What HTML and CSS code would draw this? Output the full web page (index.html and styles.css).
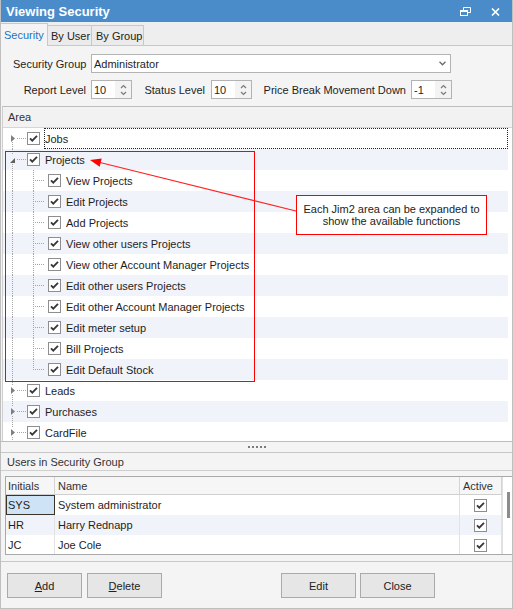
FILE: index.html
```html
<!DOCTYPE html>
<html>
<head>
<meta charset="utf-8">
<link rel="stylesheet" href="styles.css">
</head>
<body>
<div class="window">
  <div class="titlebar">
    <span class="title">Viewing Security</span>
    <div class="tb-icons">
      <svg class="restore" width="11" height="9" viewBox="0 0 11 9" fill="none" stroke="#fff"><path d="M3.5 3V0.5h7v5H8"/><rect x="0.5" y="3.5" width="7" height="5"/><path d="M0.5 4.5h7"/></svg>
      <svg class="close" width="9" height="8" viewBox="0 0 9 8" fill="none" stroke="#fff" stroke-width="1.6"><path d="M1 0.5l7 7M8 0.5l-7 7"/></svg>
    </div>
  </div>

  <div class="tabs">
    <div class="tab active t-sec">Security</div>
    <div class="tab t-user">By User</div>
    <div class="tab t-group">By Group</div>
  </div>

  <div class="form">
    <div class="frow">
      <span class="flabel w-sg">Security Group</span>
      <div class="combo"><span>Administrator</span><svg width="7" height="5" viewBox="0 0 7 5" fill="none" stroke="#6b6b6b" stroke-width="1.3"><path d="M0.5 0.8l3 3 3-3"/></svg></div>
    </div>
    <div class="frow">
      <span class="flabel w-rl">Report Level</span>
      <div class="spin"><span class="sv">10</span><span class="sb"><svg width="7" height="12" viewBox="0 0 7 12" fill="none" stroke="#7a7a7a" stroke-width="1.2"><path d="M1 4l2.5-2.5L6 4M1 8l2.5 2.5L6 8"/></svg></span></div>
      <span class="flabel w-st">Status Level</span>
      <div class="spin"><span class="sv">10</span><span class="sb"><svg width="7" height="12" viewBox="0 0 7 12" fill="none" stroke="#7a7a7a" stroke-width="1.2"><path d="M1 4l2.5-2.5L6 4M1 8l2.5 2.5L6 8"/></svg></span></div>
      <span class="flabel w-pb">Price Break Movement Down</span>
      <div class="spin"><span class="sv">-1</span><span class="sb"><svg width="7" height="12" viewBox="0 0 7 12" fill="none" stroke="#7a7a7a" stroke-width="1.2"><path d="M1 4l2.5-2.5L6 4M1 8l2.5 2.5L6 8"/></svg></span></div>
    </div>
  </div>

  <div class="tree">
    <div class="tree-head">Area</div>
    <div class="tree-body">
      <div class="trow"><span class="g0 rootfirst"><svg class="exp-c" width="4" height="7" viewBox="0 0 4 7"><path d="M0 0L4 3.5L0 7Z"/></svg></span><span class="cb"><svg viewBox="0 0 11 11"><path d="M2 5.3l2.3 2.4L9 2.8"/></svg></span><span class="tl focus">Jobs</span></div>
      <div class="trow"><span class="g0 root"><svg class="exp-e" width="5" height="5" viewBox="0 0 5 5"><path d="M5 0V5H0Z"/></svg></span><span class="cb"><svg viewBox="0 0 11 11"><path d="M2 5.3l2.3 2.4L9 2.8"/></svg></span><span class="tl">Projects</span></div>
      <div class="trow"><span class="g0 pass"></span><span class="g1"></span><span class="cb"><svg viewBox="0 0 11 11"><path d="M2 5.3l2.3 2.4L9 2.8"/></svg></span><span class="tl">View Projects</span></div>
      <div class="trow"><span class="g0 pass"></span><span class="g1"></span><span class="cb"><svg viewBox="0 0 11 11"><path d="M2 5.3l2.3 2.4L9 2.8"/></svg></span><span class="tl">Edit Projects</span></div>
      <div class="trow"><span class="g0 pass"></span><span class="g1"></span><span class="cb"><svg viewBox="0 0 11 11"><path d="M2 5.3l2.3 2.4L9 2.8"/></svg></span><span class="tl">Add Projects</span></div>
      <div class="trow"><span class="g0 pass"></span><span class="g1"></span><span class="cb"><svg viewBox="0 0 11 11"><path d="M2 5.3l2.3 2.4L9 2.8"/></svg></span><span class="tl">View other users Projects</span></div>
      <div class="trow"><span class="g0 pass"></span><span class="g1"></span><span class="cb"><svg viewBox="0 0 11 11"><path d="M2 5.3l2.3 2.4L9 2.8"/></svg></span><span class="tl">View other Account Manager Projects</span></div>
      <div class="trow"><span class="g0 pass"></span><span class="g1"></span><span class="cb"><svg viewBox="0 0 11 11"><path d="M2 5.3l2.3 2.4L9 2.8"/></svg></span><span class="tl">Edit other users Projects</span></div>
      <div class="trow"><span class="g0 pass"></span><span class="g1"></span><span class="cb"><svg viewBox="0 0 11 11"><path d="M2 5.3l2.3 2.4L9 2.8"/></svg></span><span class="tl">Edit other Account Manager Projects</span></div>
      <div class="trow"><span class="g0 pass"></span><span class="g1"></span><span class="cb"><svg viewBox="0 0 11 11"><path d="M2 5.3l2.3 2.4L9 2.8"/></svg></span><span class="tl">Edit meter setup</span></div>
      <div class="trow"><span class="g0 pass"></span><span class="g1"></span><span class="cb"><svg viewBox="0 0 11 11"><path d="M2 5.3l2.3 2.4L9 2.8"/></svg></span><span class="tl">Bill Projects</span></div>
      <div class="trow"><span class="g0 pass"></span><span class="g1 last"></span><span class="cb"><svg viewBox="0 0 11 11"><path d="M2 5.3l2.3 2.4L9 2.8"/></svg></span><span class="tl">Edit Default Stock</span></div>
      <div class="trow"><span class="g0 root"><svg class="exp-c" width="4" height="7" viewBox="0 0 4 7"><path d="M0 0L4 3.5L0 7Z"/></svg></span><span class="cb"><svg viewBox="0 0 11 11"><path d="M2 5.3l2.3 2.4L9 2.8"/></svg></span><span class="tl">Leads</span></div>
      <div class="trow"><span class="g0 root"><svg class="exp-c" width="4" height="7" viewBox="0 0 4 7"><path d="M0 0L4 3.5L0 7Z"/></svg></span><span class="cb"><svg viewBox="0 0 11 11"><path d="M2 5.3l2.3 2.4L9 2.8"/></svg></span><span class="tl">Purchases</span></div>
      <div class="trow"><span class="g0 root"><svg class="exp-c" width="4" height="7" viewBox="0 0 4 7"><path d="M0 0L4 3.5L0 7Z"/></svg></span><span class="cb"><svg viewBox="0 0 11 11"><path d="M2 5.3l2.3 2.4L9 2.8"/></svg></span><span class="tl">CardFile</span></div>
    </div>
  </div>

  <div class="splitter"><span class="dots"><i></i><i></i><i></i><i></i><i></i></span></div>

  <div class="users-head">Users in Security Group</div>

  <div class="grid">
    <div class="gtable">
      <div class="gc gh">Initials</div><div class="gc gh">Name</div><div class="gc gh">Active</div>
      <div class="gc sel">SYS</div><div class="gc">System administrator</div><div class="gc gck"><span class="cb"><svg viewBox="0 0 11 11"><path d="M2 5.3l2.3 2.4L9 2.8"/></svg></span></div>
      <div class="gc alt">HR</div><div class="gc alt">Harry Rednapp</div><div class="gc gck alt"><span class="cb"><svg viewBox="0 0 11 11"><path d="M2 5.3l2.3 2.4L9 2.8"/></svg></span></div>
      <div class="gc">JC</div><div class="gc">Joe Cole</div><div class="gc gck"><span class="cb"><svg viewBox="0 0 11 11"><path d="M2 5.3l2.3 2.4L9 2.8"/></svg></span></div>
    </div>
    <div class="vscroll"><span class="thumb"></span></div>
  </div>

  <div class="buttons">
    <div class="btn"><u>A</u>dd</div>
    <div class="btn"><u>D</u>elete</div>
    <div class="btn b-edit">Edit</div>
    <div class="btn b-close">Close</div>
  </div>

  <div class="redbox"></div>
  <svg class="arrow" width="513" height="609" viewBox="0 0 513 609">
    <line x1="100" y1="162.5" x2="296" y2="211" stroke="#f22" stroke-width="1.1"/>
    <polygon points="90,160 101.7,158.6 99.7,166.8" fill="#f00"/>
  </svg>
  <div class="callout">Each Jim2 area can be expanded to<br>show the available functions</div>
</div>
</body>
</html>
```

FILE: styles.css
```css
html, body {
  margin: 0;
  padding: 0;
}
body {
  font-family: "Liberation Sans", Arial, sans-serif;
  font-size: 11px;
  color: #1e1e1e;
  background: #ffffff;
}
.window {
  --dv: repeating-linear-gradient(to bottom, #a6a6a6 0 1px, transparent 1px 2px);
  --dh: repeating-linear-gradient(to right, #a6a6a6 0 1px, transparent 1px 2px);
  position: relative;
  width: 513px;
  height: 609px;
  box-sizing: border-box;
  border: 1px solid #bfbfbf;
  border-top: none;
  background: #f4f4f4;
  display: flex;
  flex-direction: column;
  overflow: hidden;
}

/* title bar */
.titlebar {
  margin: 0 -1px;
  height: 22px;
  flex: none;
  background: #4a8cca;
  color: #fff;
  display: flex;
  align-items: center;
  padding: 0 13px 0 6px;
}
.title {
  font-weight: bold;
  font-size: 13px;
  letter-spacing: 0;
}
.tb-icons {
  margin-left: auto;
  display: flex;
  align-items: center;
  gap: 20px;
}
.tb-icons .restore { margin-top: 1px; }
.tb-icons .close { margin-top: 2px; }

/* tabs */
.tabs {
  flex: none;
  height: 24px;
  box-sizing: border-box;
  background: #eeeeee;
  border-bottom: 1px solid #c8c8c8;
  display: flex;
  align-items: flex-end;
}
.tab {
  height: 20px;
  box-sizing: border-box;
  border: 1px solid #c8c8c8;
  border-bottom: none;
  background: #ebebeb;
  display: flex;
  align-items: center;
  padding: 1px 0 0 3px;
  margin-left: -1px;
  color: #222;
}
.tab.active {
  height: 23px;
  background: #f4f4f4;
  color: #1f72c4;
  margin-bottom: -1px;
  margin-left: -1px;
  position: relative;
  z-index: 1;
  padding-top: 0;
  padding-bottom: 1px;
}
.t-sec { width: 48px; }
.t-user { width: 45px; }
.t-group { width: 53px; padding-left: 4px; }

/* form */
.form {
  flex: none;
  padding: 8px 0 7px 12px;
  display: flex;
  flex-direction: column;
  gap: 7px;
}
.frow {
  display: flex;
  align-items: center;
  height: 19px;
}
.flabel {
  text-align: right;
  white-space: nowrap;
  color: #1e1e1e;
}
.w-sg { width: 73px; margin-right: 5px; }
.w-rl { width: 73px; margin-right: 5px; }
.w-st { width: 73px; margin-right: 6px; }
.w-pb { width: 154px; margin-right: 5px; }
.combo {
  width: 360px;
  height: 19px;
  box-sizing: border-box;
  border: 1px solid #b3b3b3;
  background: #fff;
  display: flex;
  align-items: center;
  justify-content: space-between;
  padding: 0 4px 0 2px;
}
.spin {
  width: 41px;
  height: 19px;
  box-sizing: border-box;
  border: 1px solid #b3b3b3;
  background: #fff;
  display: flex;
  align-items: stretch;
}
.sv {
  flex: 1;
  display: flex;
  align-items: center;
  padding-left: 2px;
}
.sb {
  width: 16px;
  background: #f3f3f3;
  display: flex;
  align-items: center;
  justify-content: center;
}

/* tree */
.tree {
  flex: none;
  height: 335px;
  box-sizing: border-box;
  border-top: 1px solid #bdbdbd;
  margin-left: 1px;
  border-left: 1px solid #cfcfcf;
  background: #fff;
  display: flex;
  flex-direction: column;
}
.tree-head {
  flex: none;
  height: 21px;
  box-sizing: border-box;
  border-bottom: 1px solid #d6d6d6;
  background: #f2f2f2;
  display: flex;
  align-items: center;
  padding-left: 5px;
  color: #333;
}
.tree-body {
  flex: 1;
  overflow: hidden;
  padding-right: 4px;
  background: #fff;
}
.trow {
  height: 21px;
  display: flex;
  align-items: center;
  color: #1e1e1e;
}
.trow:nth-child(even) {
  background: #f0f3f9;
}
.g0 {
  flex: none;
  width: 24px;
  height: 21px;
  display: flex;
  align-items: center;
}
.g0.rootfirst {
  background:
    var(--dv) 9px 14px / 1px 7px no-repeat,
    var(--dh) 14px 10px / 10px 1px no-repeat;
}
.g0.root {
  background:
    var(--dv) 9px 0 / 1px 6px no-repeat,
    var(--dv) 9px 15px / 1px 6px no-repeat,
    var(--dh) 14px 10px / 10px 1px no-repeat;
}
.g0.pass {
  background: var(--dv) 9px 0 / 1px 100% no-repeat;
}
.g1 {
  flex: none;
  width: 21px;
  height: 21px;
  background:
    var(--dv) 6px 0 / 1px 100% no-repeat,
    var(--dh) 8px 10px / 10px 1px no-repeat;
}
.g1.last {
  background:
    var(--dv) 6px 0 / 1px 11px no-repeat,
    var(--dh) 8px 10px / 10px 1px no-repeat;
}
.exp-c {
  margin-left: 8px;
  fill: #7f7f7f;
}
.exp-e {
  margin-left: 7px;
  margin-top: 1px;
  fill: #5f5f5f;
}
.cb {
  flex: none;
  width: 13px;
  height: 13px;
  box-sizing: border-box;
  border: 1px solid #8e8e8e;
  background: #fff;
  display: flex;
}
.cb svg {
  width: 11px;
  height: 11px;
  fill: none;
  stroke: #383838;
  stroke-width: 1.8;
}
.tl {
  align-self: stretch;
  display: flex;
  align-items: center;
  margin-left: 4px;
  padding-left: 1px;
  white-space: nowrap;
}
.tl.focus {
  flex: 1;
  outline: 1px dotted #222;
  outline-offset: -1px;
}

/* splitter */
.splitter {
  flex: none;
  height: 12px;
  box-sizing: border-box;
  border-top: 1px solid #bcbcbc;
  border-bottom: 1px solid #c6c6c6;
  display: flex;
  align-items: center;
  justify-content: center;
  background: #f4f4f4;
}
.dots {
  display: flex;
  gap: 2px;
  margin-left: 0;
}
.dots i {
  width: 2px;
  height: 2px;
  background: #7b7b7b;
}

/* users */
.users-head {
  flex: none;
  height: 18px;
  box-sizing: border-box;
  border-bottom: 1px solid #cfcfcf;
  padding: 3px 0 0 6px;
  color: #333;
}
.grid {
  flex: none;
  margin: 5px 0 0 4px;
  height: 79px;
  box-sizing: border-box;
  border: 1px solid #a9a9a9;
  border-right: none;
  background: #fff;
  display: flex;
  overflow: hidden;
}
.gtable {
  display: grid;
  grid-template-columns: 49px 405px 42px;
  grid-template-rows: 18px 20px 20px 20px;
}
.gc {
  box-sizing: border-box;
  border-right: 1px solid #e2e2e2;
  display: flex;
  align-items: center;
  padding-left: 2px;
  white-space: nowrap;
}
.gc:nth-child(3n+2) { padding-left: 3px; }
.gh {
  background: #f6f6f6;
  border-right: 1px solid #d4d4d4;
  border-bottom: 1px solid #cfcfcf;
  color: #333;
  padding-left: 2px;
}
.gh:nth-child(3) { padding-left: 3px; }
.gc.alt { background: #f0f3f9; }
.gc.sel {
  background: #cfe3f7;
  border: 1px solid #3a3428;
  padding-left: 1px;
}
.gc.gck {
  justify-content: center;
  padding-left: 0;
}
.vscroll {
  flex: 1;
  display: flex;
  justify-content: center;
  padding-top: 15px;
  border-left: 1px solid #e0e0e0;
}
.thumb {
  width: 3px;
  height: 26px;
  background: #8c8c8c;
  margin-left: 1px;
}

/* buttons */
.buttons {
  flex: 1;
  margin-top: 6px;
  border-top: 1px solid #c8c8c8;
  display: flex;
  align-items: flex-start;
  padding: 11px 0 0 6px;
}
.btn {
  width: 75px;
  height: 25px;
  box-sizing: border-box;
  border: 1px solid #aaaaaa;
  background: #e6e6e6;
  display: flex;
  align-items: center;
  justify-content: center;
  color: #222;
}
.btn + .btn { margin-left: 5px; }
.btn u { text-decoration: underline; text-underline-offset: 1px; }
.b-edit { margin-left: 119px !important; }
.b-close { margin-left: 4px !important; }

/* annotations */
.redbox {
  position: absolute;
  left: 4px;
  top: 151px;
  width: 250px;
  height: 231px;
  box-sizing: border-box;
  border: 1px solid #f00;
}
.arrow {
  position: absolute;
  left: -1px;
  top: 0;
  pointer-events: none;
}
.callout {
  position: absolute;
  left: 295px;
  top: 195px;
  width: 191px;
  height: 40px;
  box-sizing: border-box;
  border: 1.5px solid #f00;
  background: #fff;
  color: #222;
  text-align: center;
  line-height: 12px;
  padding-top: 7px;
}
```
